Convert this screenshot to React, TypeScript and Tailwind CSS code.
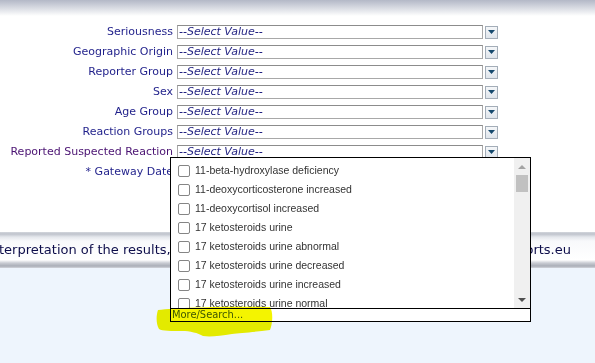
import React from "react";

const rows: { label: string; purple?: boolean }[] = [
  { label: "Seriousness" },
  { label: "Geographic Origin" },
  { label: "Reporter Group" },
  { label: "Sex" },
  { label: "Age Group" },
  { label: "Reaction Groups" },
  { label: "Reported Suspected Reaction", purple: true },
];

const items = [
  "11-beta-hydroxylase deficiency",
  "11-deoxycorticosterone increased",
  "11-deoxycortisol increased",
  "17 ketosteroids urine",
  "17 ketosteroids urine abnormal",
  "17 ketosteroids urine decreased",
  "17 ketosteroids urine increased",
  "17 ketosteroids urine normal",
];

function SelectRow({ label, purple }: { label: string; purple?: boolean }) {
  return (
    <div className="flex h-[20px] items-center">
      <div
        className={
          "w-[173px] text-right text-[11px] leading-[14px] whitespace-nowrap " +
          (purple ? "text-[#4a1272]" : "text-[#1f1f8a]")
        }
      >
        {label}
      </div>
      <div className="ml-[4px] flex h-[14px] w-[306px] items-center border border-[#a8a8a8] border-t-[#8c8c8c] bg-white pl-[1px]">
        <span className="text-[11px] italic leading-[12px] text-[#1f1f80]">--Select Value--</span>
      </div>
      <div className="ml-[2px] flex h-[13px] w-[13px] items-center justify-center border border-[#a3adb8] bg-gradient-to-b from-[#f5f7f9] to-[#dfe5ec]">
        <svg width="7" height="4" viewBox="0 0 7 4">
          <path d="M0 0 H7 L3.5 4 Z" fill="#164a6e" />
        </svg>
      </div>
    </div>
  );
}

export default function App() {
  return (
    <div className="relative h-[363px] w-[595px] overflow-hidden bg-white font-['DejaVu_Sans',Verdana,sans-serif]">
      <div className="h-[16px] bg-gradient-to-b from-[#b3b8c7] to-white" />
      <div className="flex flex-col pt-[6px]">
        {rows.map((r) => (
          <SelectRow key={r.label} label={r.label} purple={r.purple} />
        ))}
        <div className="flex h-[20px] items-center">
          <div className="w-[173px] text-right text-[11px] leading-[14px] text-[#1f1f8a]">* Gateway Date</div>
        </div>
      </div>
      <div className="mt-[50px] flex h-[36px] items-center justify-between whitespace-nowrap bg-[linear-gradient(to_bottom,#d3d6dd_0px,#bfc3cc_2px,#e4e7ec_5px,#f8f9fb_9px,#ffffff_28px,#c9ccd3_31px,#aaaeb7_34px,#d2d5db_36px)] pr-[24px] text-[13px] text-[#0d0d4a]">
        <span className="-ml-[1px]">terpretation of the results,</span>
        <span>adrreports.eu</span>
      </div>
      <div className="h-[95px] bg-[#eef5fd]" />

      {/* dropdown popup */}
      <div className="absolute left-[170px] top-[157px] flex h-[165px] w-[361px] flex-col border border-black bg-white">
        <div className="flex h-[150px] overflow-hidden">
          <div className="flex-1 overflow-hidden pt-[3px] pl-[7px]">
            {items.map((it) => (
              <div key={it} className="flex h-[19px] items-center">
                <div className="h-[12px] w-[12px] rounded-[2px] border border-[#858585] bg-white" />
                <span className="ml-[5px] whitespace-nowrap font-['Liberation_Sans',Arial,sans-serif] text-[10.5px] text-[#333333]">
                  {it}
                </span>
              </div>
            ))}
          </div>
          <div className="relative flex w-[16px] flex-col bg-[#f0f0f0]">
            <div className="flex h-[17px] items-center justify-center">
              <svg width="8" height="4" viewBox="0 0 8 4">
                <path d="M0 4 H8 L4 0 Z" fill="#a3a3a3" />
              </svg>
            </div>
            <div className="ml-[2px] h-[17px] w-[12px] bg-[#c1c1c1]" />
            <div className="flex-1" />
            <div className="flex h-[17px] items-center justify-center">
              <svg width="8" height="4" viewBox="0 0 8 4">
                <path d="M0 0 H8 L4 4 Z" fill="#505050" />
              </svg>
            </div>
          </div>
        </div>
        <div className="flex h-[13px] items-center border-t border-black bg-white pl-[1px]">
          <span className="font-['DejaVu_Sans_Condensed','DejaVu_Sans',sans-serif] text-[11px] leading-[12px] text-[#3f5a10]">
            More/Search...
          </span>
        </div>
      </div>

      {/* highlighter */}
      <svg
        className="pointer-events-none absolute left-0 top-0 mix-blend-multiply"
        width="595"
        height="363"
        viewBox="0 0 595 363"
      >
        <path
          d="M158 310 C180 307 240 306 270 307 C273 312 273 322 270 330 C255 332 240 333 232 334 C220 336 210 337 203 336 C198 333 190 331 182 331 C172 331 162 331 159 329 C156 324 156 316 158 310 Z"
          fill="#f4f400"
        />
      </svg>
    </div>
  );
}
